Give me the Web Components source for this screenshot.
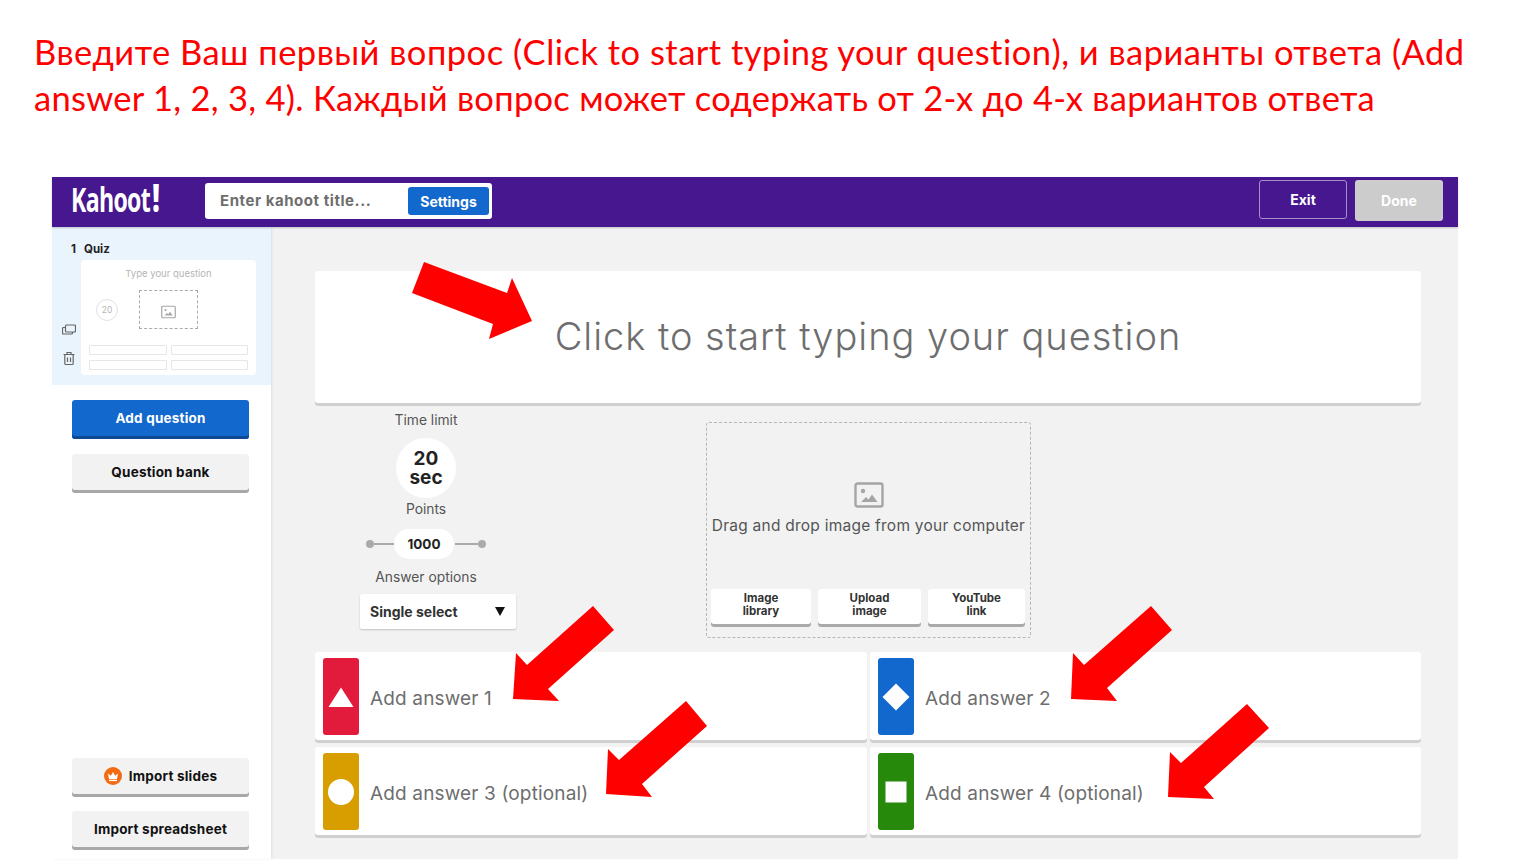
<!DOCTYPE html>
<html lang="ru">
<head>
<meta charset="utf-8">
<title>Kahoot</title>
<style>
  html,body{margin:0;background:#fff}
  body{width:1540px;height:864px;overflow:hidden;position:relative;font-family:Inter,"Liberation Sans",sans-serif}
  kahoot-app{margin-left:52px;width:1406px;height:682px}
</style>
</head>
<body>
<slide-title><span style="letter-spacing:.48px">Введите Ваш первый вопрос (Click to start typing your question), и варианты ответа (Add</span><br><span style="letter-spacing:.28px">answer 1, 2, 3, 4). Каждый вопрос может содержать от 2-х до 4-х вариантов ответа</span></slide-title>
<kahoot-app>
  <kahoot-topbar slot="top"></kahoot-topbar>
  <kahoot-sidebar slot="side"></kahoot-sidebar>
  <question-box>Click to start typing your question</question-box>
  <div style="display:flex;height:246px">
    <quiz-settings></quiz-settings>
    <media-drop></media-drop>
  </div>
  <div style="display:grid;grid-template-columns:552px 551px;column-gap:3px;row-gap:4px">
    <answer-card color="#e21b3c" shape="triangle">Add answer 1</answer-card>
    <answer-card color="#1368ce" shape="diamond">Add answer 2</answer-card>
    <answer-card color="#d89e00" shape="circle">Add answer 3 (optional)</answer-card>
    <answer-card color="#26890c" shape="square">Add answer 4 (optional)</answer-card>
  </div>
</kahoot-app>
<red-arrows></red-arrows>

<script>
const IMG_ICON = `<svg viewBox="0 0 30 26" width="100%" height="100%"><rect x="1.5" y="1.5" width="27" height="23" rx="2" fill="none" stroke="currentColor" stroke-width="2.4"/><circle cx="9" cy="9" r="2.2" fill="currentColor"/><path d="M7 20l5-5 2.500 2.500 3.500-5 5.500 7.500z" fill="currentColor"/></svg>`;

class SlideTitle extends HTMLElement {
  constructor(){
    super();
    this.attachShadow({mode:'open'}).innerHTML = `
      <style>
        :host{display:block;height:177px;box-sizing:border-box;padding:29px 0 0 34px;color:#f00;white-space:nowrap;
          font:400 34.500px/46px Lato,"Open Sans",sans-serif}
      </style><slot></slot>`;
  }
}

class KahootApp extends HTMLElement {
  constructor(){
    super();
    this.attachShadow({mode:'open'}).innerHTML = `
      <style>
        :host{display:grid;grid-template-columns:219px 1fr;grid-template-rows:50px 1fr;background:#f2f2f2;
          font-family:Inter,"Liberation Sans",sans-serif}
        .top{grid-column:1/3}
        .main{padding:44px 37px 0 44px;min-width:0}
      </style>
      <div class="top"><slot name="top"></slot></div>
      <slot name="side"></slot>
      <div class="main"><slot></slot></div>`;
  }
}

class KahootTopbar extends HTMLElement {
  constructor(){
    super();
    this.attachShadow({mode:'open'}).innerHTML = `
      <style>
        :host{display:flex;align-items:flex-start;height:50px;box-sizing:border-box;background:#46178f;padding:3px 15px 0 19px;
          box-shadow:0 1px 2px rgba(0,0,0,.2);position:relative;z-index:2}
        .logo{width:90px;height:38px;flex:none;margin-top:-2px;color:#fff;font:700 34px/38px "Open Sans",sans-serif;letter-spacing:-1px;white-space:nowrap;
          transform-origin:0 50%;transform:scaleX(.68)}
        .logo b{font-size:38px;font-weight:800;margin-left:3px}
        .title{margin:3px 0 0 44px;width:287px;height:36px;box-sizing:border-box;background:#fff;border-radius:3px;display:flex;align-items:center;justify-content:space-between;padding:0 3px 0 15px}
        .title span{font-size:15px;font-weight:700;color:#6e6e6e;letter-spacing:.55px;position:relative;top:-1px}
        .title button{width:81px;height:28px;border:0;border-radius:3px;background:#1368ce;color:#fff;font:700 14px Inter,sans-serif;padding:0}
        .right{margin-left:auto;display:flex;gap:8px}
        .exit,.done{width:88px;box-sizing:border-box;border-radius:3px;font:700 14px Inter,sans-serif;padding:0;color:#fff}
        .exit{height:39px;background:#46178f;border:1px solid #a78fcb}
        .done{height:41px;background:#cccccc;border:0}
      </style>
      <div class="logo">Kahoot<b>!</b></div>
      <div class="title"><span>Enter kahoot title...</span><button>Settings</button></div>
      <div class="right"><button class="exit">Exit</button><button class="done">Done</button></div>`;
  }
}

class SideButton extends HTMLElement {
  constructor(){
    super();
    this.attachShadow({mode:'open'}).innerHTML = `
      <style>
        :host{display:flex;align-items:center;justify-content:center;gap:7px;width:177px;height:39px;box-sizing:border-box;border-radius:3px;
          background:#f2f2f2;box-shadow:inset 0 -3px 0 #a8a8a8;padding-bottom:4px;color:#111;font:700 13.500px Inter,sans-serif;letter-spacing:.2px}
        :host([primary]){background:#1368ce;box-shadow:inset 0 -3px 0 #0e4a94;color:#fff;padding-bottom:3px}
      </style><slot></slot>`;
  }
}

class KahootSidebar extends HTMLElement {
  constructor(){
    super();
    this.attachShadow({mode:'open'}).innerHTML = `
      <style>
        :host{display:flex;flex-direction:column;height:632px;background:#fff;box-shadow:1px 0 2px rgba(0,0,0,.08);position:relative}
        .active{height:158px;background:#eaf4fc;display:grid;grid-template-columns:29px 1fr;grid-template-rows:18px 1fr;padding:15px 15px 0 0;box-sizing:border-box}
        .label{grid-column:1/3;padding-left:19px;font:700 11.500px/14px Inter,sans-serif;color:#222;display:flex;gap:8px}
        .tools{display:flex;flex-direction:column;align-items:center;padding:62px 0 0 5px;gap:14px;color:#666}
        .tools svg{width:14px;height:15px;display:block}
        .thumb{background:#fff;border-radius:4px;width:175px;height:115px;box-sizing:border-box;padding:8px 8px 0;display:flex;flex-direction:column}
        .q{text-align:center;font:400 9.500px/12px Inter,sans-serif;color:#b5b5b5}
        .mid{display:flex;align-items:center;gap:21px;margin:10px 0 0 7px;height:39px}
        .time{width:22px;height:22px;border-radius:50%;border:1px solid #e2e2e2;box-sizing:border-box;display:flex;align-items:center;justify-content:center;font:400 8.500px Inter,sans-serif;color:#b5b5b5}
        .img{width:59px;height:39px;box-sizing:border-box;border:1px dashed #aaa;display:flex;align-items:center;justify-content:center;color:#a5a5a5}
        .img i{display:block;width:15px;height:14px}
        .ans{display:grid;grid-template-columns:78px 77px;gap:5px 4px;margin-top:16px}
        .ans div{height:10px;border:1px solid #e6e6e6;border-radius:1px;box-sizing:border-box}
        .btns{padding:15px 0 0 20px;display:flex;flex-direction:column;gap:15px}
        .bottom{margin-top:auto;padding:0 0 9px 20px;display:flex;flex-direction:column;gap:14px}
        .crown{width:18px;height:18px;display:block}
      </style>
      <div class="active">
        <div class="label"><span>1</span><span>Quiz</span></div>
        <div class="tools">
          <svg viewBox="0 0 14 15" fill="none" stroke="currentColor" stroke-width="1.200"><rect x="3.500" y="3" width="10" height="7" rx="1"/><path d="M3.500 5.500H1.500a1 1 0 0 0-1 1V11a1 1 0 0 0 1 1h8a1 1 0 0 0 1-1v-1"/></svg>
          <svg viewBox="0 0 14 15" fill="none" stroke="currentColor" stroke-width="1.200"><path d="M1.500 3.500h11M5 3.500V1.500h4v2"/><rect x="2.800" y="3.500" width="8.400" height="10" rx="1"/><path d="M5.500 6.500v4.500M8.500 6.500v4.500"/></svg>
        </div>
        <div class="thumb">
          <div class="q">Type your question</div>
          <div class="mid"><div class="time">20</div><div class="img"><i>${IMG_ICON}</i></div></div>
          <div class="ans"><div></div><div></div><div></div><div></div></div>
        </div>
      </div>
      <div class="btns">
        <side-button primary>Add question</side-button>
        <side-button>Question bank</side-button>
      </div>
      <div class="bottom">
        <side-button><svg class="crown" viewBox="0 0 18 18"><circle cx="9" cy="9" r="9" fill="#f26b12"/><path d="M4 6.500l2.800 2.200L9 5l2.200 3.700L14 6.500l-1 5.500H5z" fill="#fff"/><rect x="5" y="12.700" width="8" height="1.400" fill="#fff"/></svg>Import slides</side-button>
        <side-button>Import spreadsheet</side-button>
      </div>`;
  }
}

class QuestionBox extends HTMLElement {
  constructor(){
    super();
    this.attachShadow({mode:'open'}).innerHTML = `
      <style>
        :host{display:flex;align-items:center;justify-content:center;height:135px;box-sizing:border-box;background:#fff;border-radius:3px;
          box-shadow:inset 0 -3px 0 #d0d0d0;color:#6e6e6e;font:300 38px Inter,sans-serif;letter-spacing:.97px;padding-bottom:5px}
      </style><slot></slot>`;
  }
}

class QuizSettings extends HTMLElement {
  constructor(){
    super();
    this.attachShadow({mode:'open'}).innerHTML = `
      <style>
        :host{display:flex;flex-direction:column;align-items:center;width:222px;flex:none;color:#555;font:400 13.800px Inter,sans-serif}
        .lab{height:18px;line-height:18px;white-space:nowrap}
        .time{margin:9px 0 2px;width:60px;height:60px;box-sizing:border-box;padding-top:11px;border-radius:50%;background:#fff;color:#222;text-align:center;font:700 19px/19px Inter,sans-serif}
        .pts{display:flex;align-items:center;margin:11px 0 9px;width:120px}
        .dot{width:8px;height:8px;border-radius:50%;background:#aaa;flex:none}
        .line{flex:1;height:1.500px;background:#aaa}
        .line.l{flex:none;width:20px}
        .pill{width:60px;height:30px;border-radius:15px;background:#fff;color:#222;font:700 13.500px/30px Inter,sans-serif;text-align:center;margin:0 1px 0 0}
        .sel{margin:8px 0 0 24px;width:156px;height:35px;box-sizing:border-box;background:#fff;border-radius:2px;box-shadow:0 1px 2px rgba(0,0,0,.2);display:flex;align-items:center;justify-content:space-between;padding:0 11px 0 10px;color:#333;font:700 14px Inter,sans-serif}
        .sel i{width:0;height:0;border:5.500px solid transparent;border-top:9px solid #111;border-bottom:0}
      </style>
      <div class="lab" style="margin-top:5px">Time limit</div>
      <div class="time">20<br>sec</div>
      <div class="lab">Points</div>
      <div class="pts"><span class="dot"></span><span class="line l"></span><span class="pill">1000</span><span class="line"></span><span class="dot"></span></div>
      <div class="lab">Answer options</div>
      <div class="sel"><span>Single select</span><i></i></div>`;
  }
}

class MediaDrop extends HTMLElement {
  constructor(){
    super();
    this.attachShadow({mode:'open'}).innerHTML = `
      <style>
        :host{display:flex;flex-direction:column;align-items:center;width:325px;height:216px;flex:none;box-sizing:border-box;margin:16px 0 0 169px;
          border:1.500px dashed #b5b5b5;border-radius:3px;padding:59px 4px 0;color:#555}
        .ic{width:30px;height:26px;color:#a5a5a5}
        .txt{margin-top:8px;font:400 15.500px/20px Inter,sans-serif;white-space:nowrap;letter-spacing:.24px}
        .btns{margin-top:auto;margin-bottom:10px;align-self:stretch;display:grid;grid-template-columns:100px 103px 97px;column-gap:7px}
        .b{height:38px;box-sizing:border-box;background:#fff;border-radius:3px;box-shadow:inset 0 -3px 0 #aaa;color:#333;font:700 11.500px/13px Inter,sans-serif;text-align:center;padding-top:3px}
      </style>
      <div class="ic">${IMG_ICON}</div>
      <div class="txt">Drag and drop image from your computer</div>
      <div class="btns"><div class="b">Image<br>library</div><div class="b">Upload<br>image</div><div class="b">YouTube<br>link</div></div>`;
  }
}

class AnswerCard extends HTMLElement {
  constructor(){
    super();
    const shapes = {
      triangle:'<path d="M14 4.500L26.500 24H1.500z" fill="#fff"/>',
      diamond:'<path d="M14 .5L27.500 14 14 27.500.5 14z" fill="#fff"/>',
      circle:'<circle cx="14" cy="14" r="13" fill="#fff"/>',
      square:'<rect x="3.500" y="3.500" width="21" height="21" fill="#fff"/>'
    };
    this.attachShadow({mode:'open'}).innerHTML = `
      <style>
        :host{display:flex;height:91px;box-sizing:border-box;background:#fff;border-radius:3px;box-shadow:inset 0 -3px 0 #d0d0d0;padding:6px 8px 0;color:#6e6e6e;font:400 19px Inter,sans-serif;letter-spacing:.15px}
        .tile{width:36px;height:77px;border-radius:3px;background:${this.getAttribute('color')};display:flex;align-items:center;justify-content:center;flex:none}
        .tile svg{width:28px;height:28px;display:block}
        .t{margin-left:11px;height:77px;padding-top:4px;box-sizing:border-box;display:flex;align-items:center;white-space:nowrap}
      </style>
      <div class="tile"><svg viewBox="0 0 28 28">${shapes[this.getAttribute('shape')]}</svg></div>
      <div class="t"><slot></slot></div>`;
  }
}

// стрелки лежат поверх всего экрана, поэтому координаты абсолютные
class RedArrows extends HTMLElement {
  constructor(){
    super();
    const arrows = [
      '424,262 412,293 493,324 489,339 532,321 512,278 507,293',
      '593,606 614,630 548,689 559,701 513,699 516,653 527,665',
      '686,701 707,726 642,784 652,797 606,794 608,749 619,760',
      '1151,606 1172,630 1107,688 1117,701 1071,699 1073,653 1084,665',
      '1247,704 1269,728 1204,787 1214,799 1168,797 1170,752 1181,763'
    ];
    this.attachShadow({mode:'open'}).innerHTML = `
      <style>:host{position:absolute;left:0;top:0;width:1540px;height:864px;pointer-events:none}svg{display:block}</style>
      <svg width="1540" height="864" viewBox="0 0 1540 864">${arrows.map(p=>`<polygon points="${p}" fill="#f00"/>`).join('')}</svg>`;
  }
}

customElements.define('slide-title', SlideTitle);
customElements.define('kahoot-app', KahootApp);
customElements.define('kahoot-topbar', KahootTopbar);
customElements.define('side-button', SideButton);
customElements.define('kahoot-sidebar', KahootSidebar);
customElements.define('question-box', QuestionBox);
customElements.define('quiz-settings', QuizSettings);
customElements.define('media-drop', MediaDrop);
customElements.define('answer-card', AnswerCard);
customElements.define('red-arrows', RedArrows);
</script>
</body>
</html>
